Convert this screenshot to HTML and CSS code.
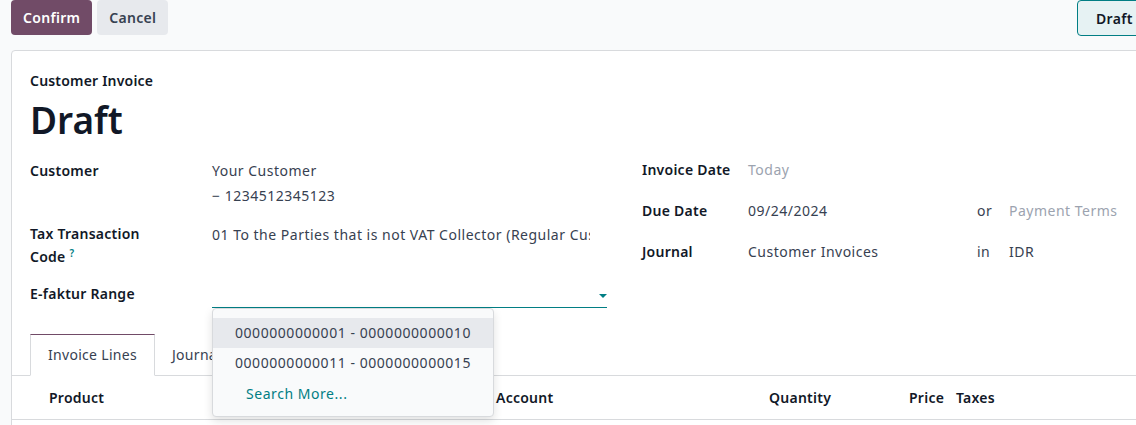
FILE: index.html
```html
<!DOCTYPE html>
<html>
<head>
<meta charset="utf-8">
<link rel="stylesheet" href="styles.css">
</head>
<body>
<div class="control-panel">
  <div class="actions">
    <button class="btn btn-primary">Confirm</button>
    <button class="btn btn-secondary">Cancel</button>
  </div>
  <div class="statusbar">
    <button class="status-btn">Draft</button>
  </div>
</div>
<div class="sheet">
  <div class="sheet-head">
    <div class="doc-type">Customer Invoice</div>
    <h1 class="doc-title">Draft</h1>
  </div>
  <div class="groups">
    <div class="group group-left">
      <div class="row row-customer">
        <div class="label">Customer</div>
        <div class="value address">
          <div>Your Customer</div>
          <div>− 1234512345123</div>
        </div>
      </div>
      <div class="row row-tax">
        <div class="label label-two">Tax Transaction<br>Code <sup class="help">?</sup></div>
        <div class="value value-clip">01 To the Parties that is not VAT Collector (Regular Customers)</div>
      </div>
      <div class="row row-efaktur">
        <div class="label">E-faktur Range</div>
        <div class="value field-input">
          <div class="input-line"><span class="caret"></span></div>
          <div class="dropdown">
            <div class="dd-item active">0000000000001 - 0000000000010</div>
            <div class="dd-item">0000000000011 - 0000000000015</div>
            <div class="dd-item search-more">Search More...</div>
          </div>
        </div>
      </div>
    </div>
    <div class="group group-right">
      <div class="rrow">
        <div class="rlabel">Invoice Date</div>
        <div class="rvalue placeholder">Today</div>
      </div>
      <div class="rrow">
        <div class="rlabel">Due Date</div>
        <div class="rvalue rsplit"><span class="date">09/24/2024</span><span class="conj">or</span><span class="placeholder">Payment Terms</span></div>
      </div>
      <div class="rrow">
        <div class="rlabel">Journal</div>
        <div class="rvalue rsplit"><span class="date">Customer Invoices</span><span class="conj">in</span><span>IDR</span></div>
      </div>
    </div>
  </div>
  <div class="tabs">
    <div class="tab active">Invoice Lines</div>
    <div class="tab">Journal Items</div>
    <div class="tab">Other Info</div>
  </div>
  <div class="table-head">
    <div class="th th-product">Product</div>
    <div class="th th-account">Account</div>
    <div class="th th-qty">Quantity</div>
    <div class="th th-price">Price</div>
    <div class="th th-taxes">Taxes</div>
  </div>
</div>
</body>
</html>
```

FILE: styles.css
```css
html, body {
  margin: 0;
  padding: 0;
  overflow: hidden;
}
body {
  width: 1136px;
  height: 425px;
  background: #f9fafb;
  font-family: "Noto Sans", "Open Sans", sans-serif;
  font-size: 14px;
  letter-spacing: 0.5px;
  color: #374151;
}
.control-panel {
  height: 50px;
  display: flex;
  justify-content: space-between;
  align-items: flex-start;
  padding-left: 11px;
  box-sizing: border-box;
}
.actions {
  display: flex;
  gap: 5px;
}
.btn {
  height: 35px;
  border: 0;
  border-radius: 4px;
  padding: 0 12px;
  font-family: inherit;
  font-size: 14px;
  font-weight: 600;
  letter-spacing: 0.3px;
}
.btn-primary {
  background: #714b67;
  color: #fff;
}
.btn-secondary {
  background: #e7e9ed;
  color: #374151;
}
.statusbar {
  display: flex;
  margin-right: -40px;
}
.status-btn {
  height: 36px;
  width: 99px;
  border: 1px solid #017e84;
  border-radius: 4px;
  background: #e6f2f3;
  color: #111827;
  font-family: inherit;
  font-size: 14px;
  font-weight: 600;
  letter-spacing: 0.3px;
  padding: 0 0 0 18px;
  text-align: left;
}
.sheet {
  margin-left: 11px;
  width: 1200px;
  background: #fff;
  border: 1px solid #d8dadd;
  border-radius: 4px 0 0 0;
  min-height: 400px;
}
.sheet-head {
  padding: 20px 18px 0 18px;
}
.doc-type {
  line-height: 20px;
  font-weight: 600;
  letter-spacing: 0.2px;
  color: #111827;
}
.doc-title {
  margin: 7px 0 0 0;
  font-size: 37px;
  line-height: 44px;
  font-weight: 600;
  letter-spacing: 0;
  color: #111827;
}
.groups {
  display: flex;
  padding: 16px 0 0 18px;
}
.group-left {
  width: 612px;
  flex: none;
}
.row {
  display: grid;
  grid-template-columns: 182px 378px;
}
.label {
  font-weight: 600;
  letter-spacing: 0.25px;
  color: #111827;
  line-height: 23px;
}
.row-customer {
  height: 64px;
}
.address {
  line-height: 25px;
}
.row-customer .label {
  line-height: 25px;
}
.row-tax {
  height: 60px;
}
.value-clip {
  white-space: nowrap;
  overflow: hidden;
  line-height: 25px;
}
.help {
  color: #017e84;
  font-size: 10px;
  vertical-align: top;
  position: relative;
  top: -3px;
}
.row-efaktur {
  height: 40px;
  grid-template-columns: 182px 395px;
}
.field-input {
  position: relative;
}
.input-line {
  height: 25px;
  border-bottom: 1px solid #017e84;
  position: relative;
}
.caret {
  position: absolute;
  right: 0;
  top: 12px;
  width: 0;
  height: 0;
  border-left: 4px solid transparent;
  border-right: 4px solid transparent;
  border-top: 4px solid #017e84;
}
.dropdown {
  position: absolute;
  left: 0;
  top: 26px;
  width: 282px;
  box-sizing: border-box;
  padding: 9px 0 8px 0;
  background: #f9fafb;
  border: 1px solid #d8dadd;
  border-radius: 4px;
  box-shadow: 0 4px 10px rgba(0, 0, 0, 0.12);
  z-index: 10;
}
.dd-item {
  height: 30px;
  line-height: 29px;
  padding-left: 22px;
  color: #374151;
  white-space: nowrap;
  letter-spacing: 0.55px;
}
.dd-item.active {
  background: #e7e9ed;
}
.dd-item.search-more {
  padding-left: 33px;
  color: #017e84;
  line-height: 31px;
}
.group-right {
  flex: none;
}
.rrow {
  display: grid;
  grid-template-columns: 106px 400px;
  height: 41px;
  line-height: 23px;
}
.rlabel {
  font-weight: 600;
  letter-spacing: 0.25px;
  color: #111827;
}
.placeholder {
  color: #9ca3af;
}
.rsplit {
  display: flex;
}
.rsplit .date {
  width: 229px;
}
.rsplit .conj {
  width: 32px;
}
.tabs {
  display: flex;
  margin-top: 12px;
  padding-left: 18px;
  border-bottom: 1px solid #d8dadd;
  height: 41px;
}
.tab {
  padding: 0 17px;
  line-height: 41px;
  color: #374151;
  white-space: nowrap;
  letter-spacing: 0.3px;
  box-sizing: border-box;
}
.tab.active {
  background: #fff;
  border: 1px solid #d8dadd;
  border-top-color: #714b67;
  border-bottom-color: #fff;
  height: 42px;
  line-height: 39px;
}
.table-head {
  display: flex;
  height: 43px;
  align-items: center;
  border-bottom: 1px solid #d8dadd;
  font-weight: 600;
  letter-spacing: 0.25px;
  color: #111827;
}
.th-product {
  padding-left: 37px;
  width: 447px;
}
.th-account {
  width: 273px;
}
.th-qty {
  width: 140px;
}
.th-price {
  width: 47px;
}
```
